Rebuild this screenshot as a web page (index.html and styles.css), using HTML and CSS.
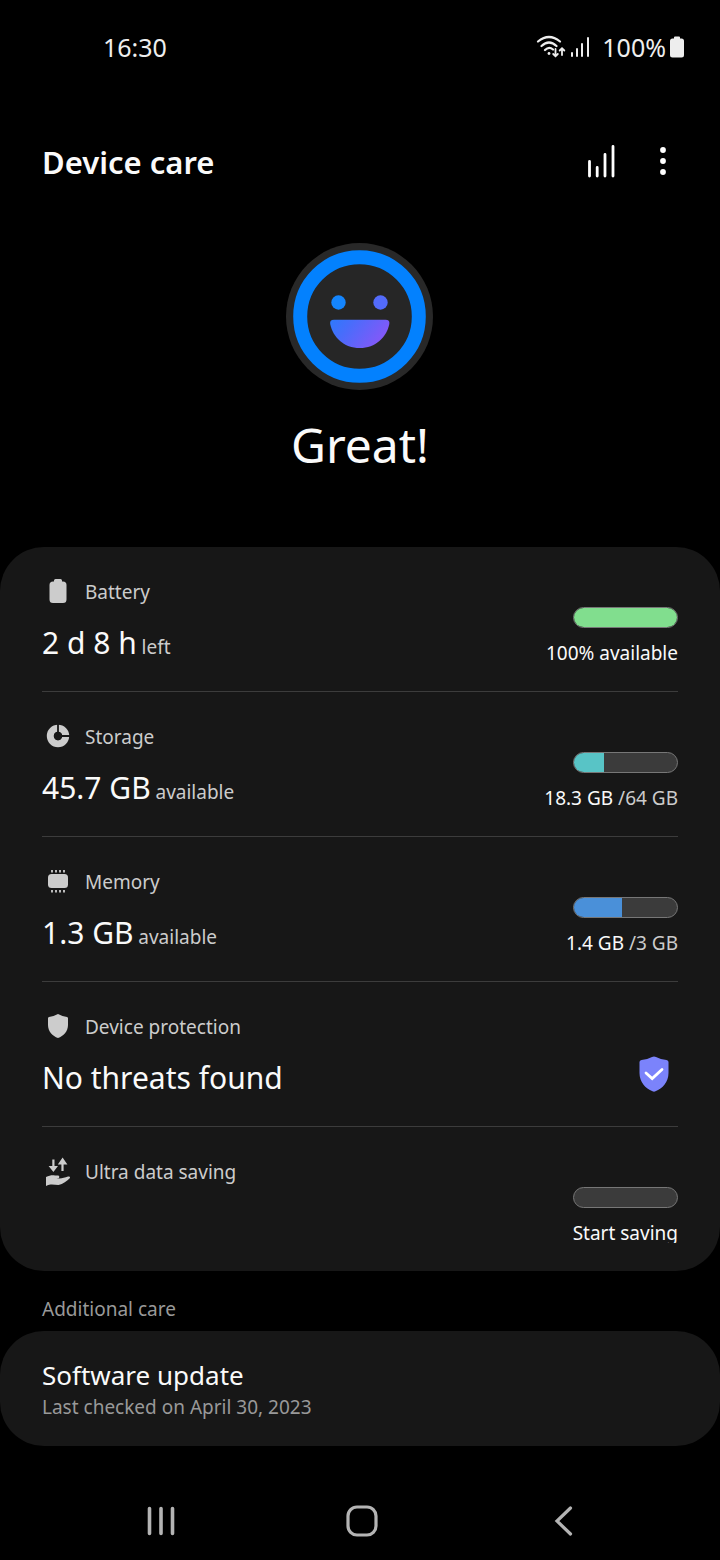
FILE: index.html
```html
<!DOCTYPE html>
<html lang="en">
  <head>
    <title>Device care</title>
    <meta charset="utf-8">
    <meta name="viewport" content="width=device-width, initial-scale=1">
    <link rel="stylesheet" href="styles.css">
  </head>
  <body>

  <div class="statusbar">
    <span>16:30</span>
    <div class="status-icons">
      <svg class="wifi" width="30" height="24" viewBox="0 0 30 24" fill="none" stroke="#eee" stroke-width="2.200" stroke-linecap="round">
        <path d="M2 6.500Q13 -2.500 24 6.500M5.500 11Q13 4 20.500 11M9 15Q13 11 17 14.500"/>
        <circle cx="13" cy="18.500" r="1.400" fill="#eee" stroke="none"/>
        <path d="M19.500 14v7M17.200 19l2.300 2.300 2.300-2.300M26 20v-6.500M23.700 15.500l2.300-2.300 2.300 2.300" stroke-width="1.800"/>
      </svg>
      <svg width="20" height="22" viewBox="0 0 20 22" fill="#eee">
        <rect x="1" y="16" width="2" height="5" rx="1"/>
        <rect x="6" y="12" width="2" height="9" rx="1"/>
        <rect x="11" y="7" width="2" height="14" rx="1"/>
        <rect x="17" y="1" width="2" height="20" rx="1"/>
      </svg>
      <span class="percent">100%</span>
      <svg width="14" height="22" viewBox="0 0 14 22" fill="#eee">
        <path d="M4 1.500Q4 .5 5 .5H9Q10 .5 10 1.500V2.500H11.500Q14 2.500 14 5V19Q14 21.500 11.500 21.500H2.500Q0 21.500 0 19V5Q0 2.500 2.500 2.500H4Z"/>
      </svg>
    </div>
  </div>

  <header class="header">
    <h1>Device care</h1>
    <button type="button" class="icon-button" aria-label="Usage history">
      <svg width="32" height="36" viewBox="0 0 32 36" stroke="#fff" stroke-width="2.800" stroke-linecap="round">
        <path d="M4.500 17.500v14.500M12.200 23.500v8.500M20 10.500v21.500M28 2.500v29.500"/>
      </svg>
    </button>
    <button type="button" class="icon-button" aria-label="More options">
      <svg width="32" height="36" viewBox="0 0 32 36" fill="#fff">
        <circle cx="16" cy="6" r="2.900"/>
        <circle cx="16" cy="17" r="2.900"/>
        <circle cx="16" cy="28" r="2.900"/>
      </svg>
    </button>
  </header>

  <section class="hero">
    <svg width="148" height="148" viewBox="0 0 148 148">
      <defs>
        <linearGradient id="smile" gradientUnits="userSpaceOnUse" x1="40" y1="54" x2="98" y2="98">
          <stop offset="0" stop-color="#1485fd"/>
          <stop offset=".5" stop-color="#4a6cfb"/>
          <stop offset="1" stop-color="#8757f8"/>
        </linearGradient>
      </defs>
      <circle cx="73.500" cy="73.500" r="73.500" fill="#282828"/>
      <circle cx="73.500" cy="73.500" r="59.300" fill="#262626" stroke="#0381fe" stroke-width="14"/>
      <circle cx="52.500" cy="59.500" r="7.200" fill="#1485fd"/>
      <circle cx="94.500" cy="59.500" r="7.200" fill="#536bfa"/>
      <path d="M48 76.800H99.500Q104 76.800 103.300 81C100.500 94.500 89.500 105 73.700 105S47 94.500 44.200 81Q43.500 76.800 48 76.800Z" fill="url(#smile)"/>
    </svg>
    <p>Great!</p>
  </section>

  <main>
    <div class="card">
      <a href="#battery" class="row">
        <span class="info">
          <span class="label">
            <svg width="32" height="32" viewBox="0 0 32 32" fill="#ccc">
              <path d="M12 4.500Q12 3 13.500 3H18.500Q20 3 20 4.500V5.500H21Q24.500 5.500 24.500 9V23.500Q24.500 27 21 27H11Q7.500 27 7.500 23.500V9Q7.500 5.500 11 5.500H12Z"/>
            </svg>
            Battery
          </span>
          <span class="value">2 d 8 h <small>left</small></span>
        </span>
        <span class="usage">
          <span class="bar"><span class="fill green" style="width: 100%"></span></span>
          <span class="note">100% available</span>
        </span>
      </a>

      <a href="#storage" class="row">
        <span class="info">
          <span class="label">
            <svg width="32" height="32" viewBox="0 0 32 32">
              <circle cx="16" cy="15" r="7.700" fill="none" stroke="#ccc" stroke-width="7"/>
              <path d="M16 15V3M16 15H28" stroke="#171717" stroke-width="1.800"/>
              <circle cx="16" cy="15" r="4.200" fill="#171717"/>
            </svg>
            Storage
          </span>
          <span class="value">45.7 GB <small>available</small></span>
        </span>
        <span class="usage">
          <span class="bar"><span class="fill teal" style="width: 29%"></span></span>
          <span class="note">18.3 GB <span class="total">/64 GB</span></span>
        </span>
      </a>

      <a href="#memory" class="row">
        <span class="info">
          <span class="label">
            <svg width="32" height="32" viewBox="0 0 32 32" fill="#ccc">
              <rect x="6" y="8" width="20" height="14" rx="3.500"/>
              <path d="M10 4v2.500M14 4v2.500M18 4v2.500M22 4v2.500M10 24v2.500M14 24v2.500M18 24v2.500M22 24v2.500" stroke="#ccc" stroke-width="1.800"/>
            </svg>
            Memory
          </span>
          <span class="value">1.3 GB <small>available</small></span>
        </span>
        <span class="usage">
          <span class="bar"><span class="fill blue" style="width: 47%"></span></span>
          <span class="note">1.4 GB <span class="total">/3 GB</span></span>
        </span>
      </a>

      <a href="#protection" class="row">
        <span class="info">
          <span class="label">
            <svg width="32" height="32" viewBox="0 0 32 32" fill="#ccc">
              <path d="M16 3Q20.500 5.500 25 6Q26 6.200 26 7.200V14C26 20.500 21.500 25 16 27C10.500 25 6 20.500 6 14V7.200Q6 6.200 7 6Q11.500 5.500 16 3Z"/>
            </svg>
            Device protection
          </span>
          <span class="value">No threats found</span>
        </span>
        <svg class="shield" width="30" height="36" viewBox="0 0 30 36">
          <path d="M13 1Q15 0 17 1Q21.500 3.500 27.500 4Q29.500 4.300 29.500 6V17C29.500 26 23.500 32.500 16.500 35.300Q15 36 13.500 35.300C6.500 32.500.5 26 .5 17V6Q.5 4.300 2.500 4Q8.500 3.500 13 1Z" fill="#7b83fb"/>
          <path d="M7 17L13.200 22.600L23 13.500" fill="none" stroke="#fff" stroke-width="2.800" stroke-linecap="round"/>
        </svg>
      </a>

      <a href="#data-saving" class="row">
        <span class="info">
          <span class="label">
            <svg width="32" height="32" viewBox="0 0 32 32" fill="#ccc">
              <path d="M10.300 3.500h2.200V10H16L11.400 16L6.600 10H10.300ZM19.400 15V8.500H15.800L20.600 1.500L25.400 8.500H21.600V15Z"/>
              <path d="M4 21C7.500 19.500 10 19 13 19.500H16Q18 20 17 22H14.500C18 23 22 22 26 20.600Q28.500 20.300 28 22C25 25 21 28 16.500 29C12 29 9 27.500 4 30Z"/>
            </svg>
            Ultra data saving
          </span>
        </span>
        <span class="usage">
          <span class="bar"></span>
          <span class="note">Start saving</span>
        </span>
      </a>
    </div>

    <h2>Additional care</h2>
    <a href="#update" class="card update">
      <span class="update-title">Software update</span>
      <span class="update-date">Last checked on April 30, 2023</span>
    </a>
  </main>

  <nav class="navbar">
    <button type="button" aria-label="Recents">
      <svg width="34" height="34" viewBox="0 0 34 34" stroke="#b4b4b4" stroke-width="3.600" stroke-linecap="round">
        <path d="M5.500 4.500v25M17 4.500v25M28.500 4.500v25"/>
      </svg>
    </button>
    <button type="button" aria-label="Home">
      <svg width="34" height="34" viewBox="0 0 34 34" fill="none" stroke="#b4b4b4" stroke-width="3.200">
        <rect x="3" y="3" width="28" height="28" rx="9"/>
      </svg>
    </button>
    <button type="button" aria-label="Back">
      <svg width="34" height="34" viewBox="0 0 34 34" fill="none" stroke="#b4b4b4" stroke-width="3.200" stroke-linecap="round">
        <path d="M24.500 4L11 17L24.500 30"/>
      </svg>
    </button>
  </nav>

  </body>
</html>
```
FILE: styles.css
```css
* {
  box-sizing: border-box;
}
body {
  margin: 0;
  min-height: 100vh;
  display: flex;
  flex-direction: column;
  background: #000;
  color: #fafafa;
  font-family: "Noto Sans", sans-serif;
  font-size: 19px;
}
h1, h2, p {
  margin: 0;
  font-weight: normal;
}
a {
  color: inherit;
  text-decoration: none;
}
button {
  display: flex;
  align-items: center;
  justify-content: center;
  padding: 0;
  border: 0;
  background: none;
  cursor: pointer;
}
svg {
  display: block;
  flex: none;
}

.statusbar {
  display: flex;
  justify-content: space-between;
  align-items: center;
  height: 94px;
  padding: 0 36px 0 103px;
  color: #eee;
  font-size: 25px;
}
.status-icons {
  display: flex;
  align-items: center;
  gap: 4px;
}
.percent {
  margin-left: 8px;
}

.header {
  display: flex;
  align-items: center;
  height: 136px;
  padding: 0 33px 0 42px;
}
.header h1 {
  flex: 1;
  font-size: 31px;
  font-weight: 600;
}
.icon-button {
  width: 48px;
  height: 48px;
  margin-left: 14px;
}

.hero {
  display: flex;
  flex-direction: column;
  align-items: center;
  gap: 22px;
  padding: 13px 0 70px;
}
.hero p {
  font-size: 48px;
  line-height: 64px;
}

.card {
  display: block;
  padding: 0 42px;
  border-radius: 44px;
  background: #171717;
}
.row {
  display: flex;
  justify-content: space-between;
  align-items: flex-start;
  min-height: 145px;
  padding: 30px 0 28px;
  border-bottom: 1px solid #3c3c3c;
}
.row:last-child {
  min-height: 144px;
  border-bottom: 0;
}
.info {
  display: flex;
  flex-direction: column;
  gap: 16px;
}
.label {
  display: flex;
  align-items: center;
  gap: 11px;
  line-height: 30px;
  height: 30px;
  color: #ccc;
}
.value {
  font-size: 30px;
  line-height: 40px;
}
.value small {
  margin-left: -3px;
  font-size: 19px;
  line-height: 1;
  color: #ccc;
}
.usage {
  display: flex;
  flex-direction: column;
  align-items: flex-end;
  gap: 15px;
  padding-top: 30px;
}
.bar {
  width: 105px;
  height: 21px;
  overflow: hidden;
  border: 1px solid #777;
  border-radius: 11px;
  background: #3b3b3b;
}
.fill {
  display: block;
  height: 100%;
}
.green {
  background: #81de8e;
}
.teal {
  background: #58c4c6;
}
.blue {
  background: #4a90d9;
}
.note {
  line-height: 20px;
}
.row:last-child .note {
  overflow: hidden;
}
.total {
  color: #ccc;
}
.shield {
  margin: 44px 9px 0 0;
}

h2 {
  padding: 24px 42px 8px;
  color: #999;
  font-size: 19px;
  line-height: 28px;
}
.update {
  display: flex;
  flex-direction: column;
  gap: 2px;
  padding: 26px 42px 27px;
}
.update-title {
  font-size: 26px;
  line-height: 36px;
}
.update-date {
  color: #999;
  line-height: 24px;
}

.navbar {
  display: flex;
  justify-content: space-between;
  height: 78px;
  margin-top: auto;
  padding: 0 133px 0 137px;
}
.navbar button {
  width: 48px;
}
```
